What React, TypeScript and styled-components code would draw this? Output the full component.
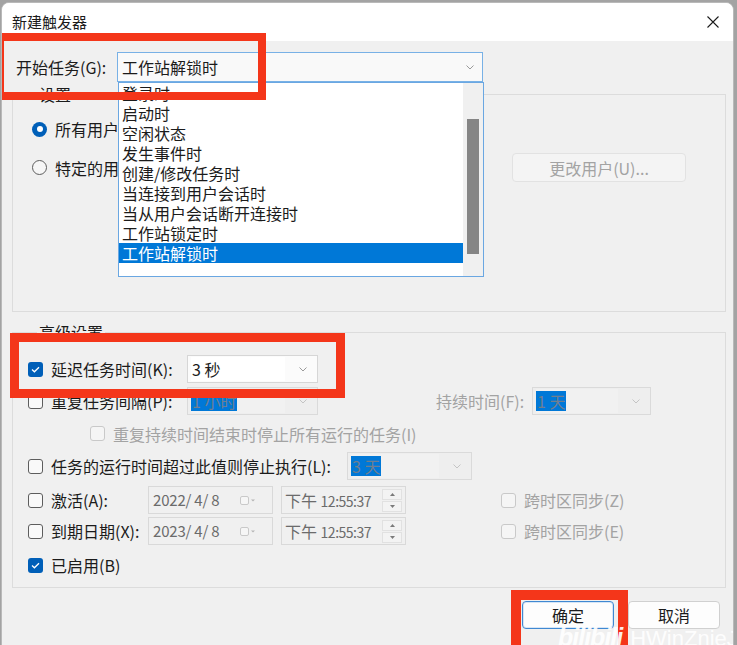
import React from "react";
import styled, { createGlobalStyle, css } from "styled-components";

const Global = createGlobalStyle`
  html, body { margin: 0; padding: 0; background: #a3a3a3; }
  body {
    font-family: "Noto Sans CJK SC", "Noto Sans", sans-serif;
    font-size: 16px;
    color: #1b1b1b;
  }
  #root { width: 737px; height: 645px; overflow: hidden; }
  * { box-sizing: border-box; }
`;

const Window = styled.div`
  position: relative;
  margin: 2px 0 0 1px;
  width: 733px;
  height: 660px;
  background: #f0f0f0;
  border: 1px solid #b9b9b9;
  border-radius: 8px;
  overflow: hidden;
`;

const TitleBar = styled.div`
  height: 38px;
  background: #ffffff;
  display: flex;
  align-items: center;
  justify-content: space-between;
  padding: 0 10px 0 10px;
  line-height: 20px;
  font-size: 15px;
`;

const CloseGlyph = styled.svg`
  width: 12px;
  height: 12px;
  margin-right: 4px;
`;

const Body = styled.div`
  padding: 11px 0 0 10px;
`;

const TopRow = styled.div`
  display: flex;
  align-items: center;
  height: 30px;
  padding-left: 4px;
  position: relative;
`;

const FieldLabel = styled.span<{ $w?: number; $disabled?: boolean }>`
  flex: none;
  width: ${(p) => (p.$w ? `${p.$w}px` : "auto")};
  line-height: 20px;
  white-space: nowrap;
  color: ${(p) => (p.$disabled ? "#a3a3a3" : "#1b1b1b")};
`;

const ComboWrap = styled.div`
  position: relative;
  flex: none;
`;

const MainCombo = styled.div`
  width: 366px;
  height: 30px;
  border: 1px solid #78b1e6;
  background: #f9f9f9;
  display: flex;
  align-items: center;
  justify-content: space-between;
  padding: 0 8px 0 4px;
  line-height: 20px;
`;

const DropList = styled.div`
  position: absolute;
  left: 1px;
  top: 100%;
  width: 366px;
  height: 195px;
  background: #ffffff;
  border: 1px solid #6aa7e2;
  display: flex;
  z-index: 5;
`;

const ListItems = styled.div`
  flex: 1;
  overflow: hidden;
`;

const ListItem = styled.div<{ $sel?: boolean }>`
  height: 20px;
  line-height: 20px;
  padding-left: 3px;
  white-space: nowrap;
  color: ${(p) => (p.$sel ? "#ffffff" : "#1b1b1b")};
  background: ${(p) => (p.$sel ? "#0078d7" : "transparent")};
`;

const ScrollTrack = styled.div`
  width: 20px;
  flex: none;
  background: #f0f0f0;
  padding: 36px 4px 0 4px;
`;

const ScrollThumb = styled.div`
  width: 12px;
  height: 135px;
  background: #858585;
`;

const Group = styled.fieldset<{ $h: number; $mt: number }>`
  margin: ${(p) => p.$mt}px 0 0 0;
  width: 714px;
  height: ${(p) => p.$h}px;
  border: 1px solid #dcdcdc;
  padding: 13px 0 0 15px;
  min-width: 0;
`;

const Legend = styled.legend`
  margin-left: 9px;
  padding: 0 2px;
  line-height: 20px;
  color: #1b1b1b;
`;

const SettingsBody = styled.div`
  padding: 2px 0 0 4px;
  display: flex;
  flex-direction: column;
  gap: 14px;
`;

const Row = styled.div<{ $h: number; $mt?: number; $pl?: number }>`
  display: flex;
  align-items: center;
  height: ${(p) => p.$h}px;
  margin-top: ${(p) => p.$mt ?? 0}px;
  padding-left: ${(p) => p.$pl ?? 0}px;
`;

const Radio = styled.span<{ $on?: boolean }>`
  flex: none;
  width: 15px;
  height: 15px;
  border-radius: 50%;
  margin-right: 8px;
  ${(p) =>
    p.$on
      ? css`
          background: #005fb8;
          display: flex;
          align-items: center;
          justify-content: center;
          &::after {
            content: "";
            width: 6px;
            height: 6px;
            border-radius: 50%;
            background: #fff;
          }
        `
      : css`
          border: 1px solid #5d5d5d;
          background: #f6f6f6;
        `}
`;

const Box = styled.span<{ $on?: boolean; $disabled?: boolean }>`
  flex: none;
  width: 15px;
  height: 15px;
  border-radius: 3px;
  margin-right: 8px;
  display: flex;
  align-items: center;
  justify-content: center;
  ${(p) =>
    p.$on
      ? css`
          background: #005fb8;
        `
      : p.$disabled
      ? css`
          border: 1px solid #c9c9c9;
          background: #f5f5f5;
        `
      : css`
          border: 1px solid #5d5d5d;
          background: #f9f9f9;
        `}
`;

const Check = () => (
  <svg width="9" height="7" viewBox="0 0 9 7">
    <polyline points="1,3.6 3.4,5.8 8,1.2" fill="none" stroke="#fff" strokeWidth="1.3" />
  </svg>
);

const CheckBox = ({ on, disabled }: { on?: boolean; disabled?: boolean }) => (
  <Box $on={on} $disabled={disabled}>{on && <Check />}</Box>
);

const Chevron = ({ color = "#8a8a8a" }: { color?: string }) => (
  <svg width="8" height="5" viewBox="0 0 8 5">
    <polyline points="0.5,0.5 4,4 7.5,0.5" fill="none" stroke={color} strokeWidth="1" />
  </svg>
);

const Push = styled.button<{ $w: number; $primary?: boolean; $disabled?: boolean }>`
  flex: none;
  width: ${(p) => p.$w}px;
  height: ${(p) => (p.$disabled ? 29 : 28)}px;
  border-radius: 4px;
  font: inherit;
  line-height: 20px;
  padding: 0;
  background: ${(p) => (p.$disabled ? "#f4f4f4" : "#fdfdfd")};
  color: ${(p) => (p.$disabled ? "#a3a3a3" : "#1b1b1b")};
  border: 1px solid ${(p) => (p.$primary ? "#3f88d2" : p.$disabled ? "#e2e2e2" : "#d0d0d0")};
  box-shadow: ${(p) => (p.$primary ? "inset 0 0 0 1px #d7e6f6" : "none")};
`;

const Combo = styled.div<{ $w: number; $disabled?: boolean }>`
  flex: none;
  width: ${(p) => p.$w}px;
  height: 28px;
  border: 1px solid ${(p) => (p.$disabled ? "#dadada" : "#d6d6d6")};
  background: ${(p) => (p.$disabled ? "#eeeeee" : "#fbfbfb")};
  display: flex;
  align-items: center;
  padding: 0 10px 0 3px;
  justify-content: space-between;
`;

const ComboText = styled.span<{ $hl?: boolean }>`
  line-height: 20px;
  padding: 0 1px;
  white-space: nowrap;
  background: ${(p) => (p.$hl ? "#0078d7" : "transparent")};
  color: ${(p) => (p.$hl ? "#6f7f90" : "#1b1b1b")};
`;

const ComboField = styled.span<{ $disabled?: boolean }>`
  flex: 1;
  height: 24px;
  display: flex;
  align-items: center;
  margin-right: 14px;
  background: ${(p) => (p.$disabled ? "#f1f1f1" : "#ffffff")};
`;

const PickBox = styled.div`
  flex: none;
  width: 125px;
  height: 28px;
  border: 1px solid #d9d9d9;
  background: #f0f0f0;
  display: flex;
  align-items: center;
  justify-content: space-between;
  padding: 0 3px 0 3px;
  color: #6b6b6b;
  line-height: 20px;
  white-space: pre;
`;

const DateText = styled.span`
  font-size: 15px;
  padding-left: 1px;
  letter-spacing: -0.2px;
`;

const TimeText = styled.span`
  color: #6b6b6b;
  white-space: nowrap;
`;

const Small = styled.span`
  font-size: 14px;
  letter-spacing: -0.5px;
`;

const Spinner = styled.div`
  width: 20px;
  display: flex;
  flex-direction: column;
  gap: 1px;
`;

const SpinPart = styled.div`
  height: 11px;
  border: 1px solid #e1e1e1;
  background: #f3f3f3;
  display: flex;
  align-items: center;
  justify-content: center;
`;

const CalIcon = () => (
  <svg width="16" height="9" viewBox="0 0 16 9" style={{ marginRight: 13 }}>
    <rect x="0.5" y="0.5" width="8" height="8" rx="1.5" fill="#f6f6f6" stroke="#c9c9c9" />
    <polygon points="11,3.5 15,3.5 13,5.5" fill="#b5b5b5" />
  </svg>
);

const Tri = ({ up }: { up?: boolean }) => (
  <svg width="5" height="3" viewBox="0 0 5 3">
    <polygon points={up ? "0,3 5,3 2.5,0" : "0,0 5,0 2.5,3"} fill="#7a7a7a" />
  </svg>
);

const Footer = styled.div`
  display: flex;
  justify-content: flex-end;
  gap: 14px;
  padding: 13px 13px 0 0;
`;

const Mark = styled.div<{ $l: number; $t: number; $w: number; $h: number; $b: number }>`
  position: absolute;
  left: ${(p) => p.$l}px;
  top: ${(p) => p.$t}px;
  width: ${(p) => p.$w}px;
  height: ${(p) => p.$h}px;
  border: ${(p) => p.$b}px solid #f4361a;
  pointer-events: none;
  z-index: 10;
`;

const Watermark = styled.div`
  position: absolute;
  left: 556px;
  top: 620px;
  display: flex;
  align-items: baseline;
  gap: 8px;
  color: rgba(255, 255, 255, 0.92);
  z-index: 11;
  font-family: "Liberation Sans", sans-serif;
  white-space: nowrap;
`;

const WmLogo = styled.span`
  font-size: 25px;
  font-weight: 700;
  font-style: italic;
  letter-spacing: -1px;
`;

const WmName = styled.span`
  font-size: 22px;
`;

const triggers = [
  "登录时",
  "启动时",
  "空闲状态",
  "发生事件时",
  "创建/修改任务时",
  "当连接到用户会话时",
  "当从用户会话断开连接时",
  "工作站锁定时",
  "工作站解锁时",
];

const Spin = () => (
  <Spinner>
    <SpinPart>
      <Tri up />
    </SpinPart>
    <SpinPart>
      <Tri />
    </SpinPart>
  </Spinner>
);

const DateRow = ({ label, date, sync, mt }: { label: string; date: string; sync: string; mt: number }) => (
  <Row $h={28} $mt={mt}>
    <CheckBox />
    <FieldLabel $w={97}>{label}</FieldLabel>
    <PickBox>
      <DateText>{date}</DateText>
      <CalIcon />
    </PickBox>
    <PickBox style={{ marginLeft: 8 }}>
      <TimeText>
        下午 <Small>12:55:37</Small>
      </TimeText>
      <Spin />
    </PickBox>
    <span style={{ width: 95, flex: "none" }} />
    <CheckBox disabled />
    <FieldLabel $disabled>{sync}</FieldLabel>
  </Row>
);

export default function App() {
  return (
    <>
      <Global />
      <Window>
        <TitleBar>
          <span>新建触发器</span>
          <CloseGlyph viewBox="0 0 12 12">
            <path d="M0.5 0.5 L11.5 11.5 M11.5 0.5 L0.5 11.5" stroke="#1b1b1b" strokeWidth="1.1" />
          </CloseGlyph>
        </TitleBar>

        <Body>
          <TopRow>
            <FieldLabel $w={101}>开始任务(G):</FieldLabel>
            <ComboWrap>
              <MainCombo>
                <span>工作站解锁时</span>
                <Chevron color="#9a9a9a" />
              </MainCombo>
              <DropList>
                <ListItems>
                  {triggers.map((t) => (
                    <ListItem key={t} $sel={t === "工作站解锁时"}>
                      {t}
                    </ListItem>
                  ))}
                </ListItems>
                <ScrollTrack>
                  <ScrollThumb />
                </ScrollTrack>
              </DropList>
            </ComboWrap>
          </TopRow>

          <Group $h={228} $mt={2}>
            <Legend>设置</Legend>
            <SettingsBody>
              <Row $h={20}>
                <Radio $on />
                <FieldLabel>所有用户(Y)</FieldLabel>
              </Row>
              <Row $h={29}>
                <Radio />
                <FieldLabel>特定的用户(S):</FieldLabel>
                <span style={{ flex: 1 }} />
                <Push $w={174} $disabled style={{ marginRight: 39 }}>
                  更改用户(U)...
                </Push>
              </Row>
            </SettingsBody>
          </Group>

          <Group $h={266} $mt={10}>
            <Legend>高级设置</Legend>
            <Row $h={28}>
              <CheckBox on />
              <FieldLabel $w={136}>延迟任务时间(K):</FieldLabel>
              <Combo $w={131}>
                <ComboField>
                  <ComboText>3 秒</ComboText>
                </ComboField>
                <Chevron color="#9a9a9a" />
              </Combo>
            </Row>
            <Row $h={28} $mt={4}>
              <CheckBox />
              <FieldLabel $w={136}>重复任务间隔(P):</FieldLabel>
              <Combo $w={131} $disabled>
                <ComboField $disabled>
                  <ComboText $hl>1 小时</ComboText>
                </ComboField>
                <Chevron color="#c4c4c4" />
              </Combo>
              <span style={{ width: 118, flex: "none" }} />
              <FieldLabel $w={96} $disabled>
                持续时间(F):
              </FieldLabel>
              <Combo $w={119} $disabled>
                <ComboField $disabled>
                  <ComboText $hl>1 天</ComboText>
                </ComboField>
                <Chevron color="#c4c4c4" />
              </Combo>
            </Row>
            <Row $h={37} $pl={62}>
              <CheckBox disabled />
              <FieldLabel $disabled>重复持续时间结束时停止所有运行的任务(I)</FieldLabel>
            </Row>
            <Row $h={28}>
              <CheckBox />
              <FieldLabel $w={296}>任务的运行时间超过此值则停止执行(L):</FieldLabel>
              <Combo $w={125} $disabled>
                <ComboField $disabled>
                  <ComboText $hl>3 天</ComboText>
                </ComboField>
                <Chevron color="#c4c4c4" />
              </Combo>
            </Row>
            <DateRow label="激活(A):" date="2022/ 4/ 8" sync="跨时区同步(Z)" mt={6} />
            <DateRow label="到期日期(X):" date="2023/ 4/ 8" sync="跨时区同步(E)" mt={3} />
            <Row $h={24} $mt={8}>
              <CheckBox on />
              <FieldLabel>已启用(B)</FieldLabel>
            </Row>
          </Group>

          <Footer>
            <Push $w={92} $primary>
              确定
            </Push>
            <Push $w={92}>取消</Push>
          </Footer>
        </Body>

        <Mark $l={-6} $t={30} $w={270} $h={67} $b={8} />
        <Mark $l={8} $t={330} $w={335} $h={65} $b={9} />
        <Mark $l={509} $t={587} $w={117} $h={70} $b={10} />
        <Watermark>
          <WmLogo>bilibili</WmLogo>
          <WmName>HWinZnieJ</WmName>
        </Watermark>
      </Window>
    </>
  );
}
